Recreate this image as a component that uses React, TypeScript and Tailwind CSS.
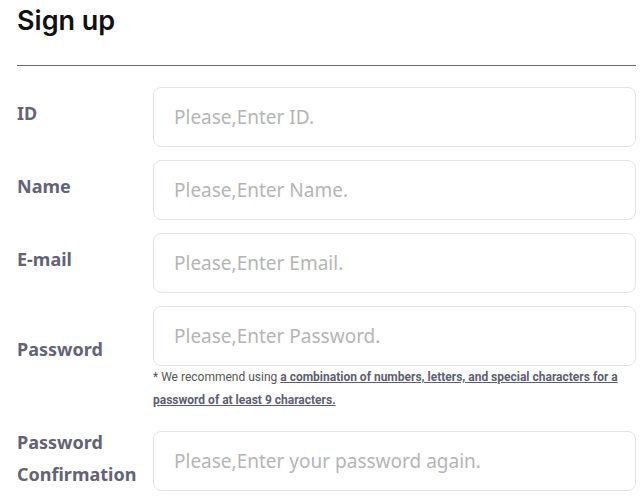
import React from 'react'

const rows = [
  { label: 'ID', placeholder: 'Please,Enter ID.' },
  { label: 'Name', placeholder: 'Please,Enter Name.' },
  { label: 'E-mail', placeholder: 'Please,Enter Email.' },
]

const Field = ({ placeholder }: { placeholder: string }) => (
  <input
    type="text"
    placeholder={placeholder}
    className="w-full h-[60px] rounded-lg border border-[#e4e4e4] bg-white px-5 text-[19px] text-[#333] placeholder:text-[#b5b5b5] outline-none font-['Noto_Sans',sans-serif]"
  />
)

export default function App() {
  return (
    <div className="w-[644px] h-[499px] overflow-hidden bg-white px-[17px] pr-[8px]">
      <h1 className="pt-[1px] text-[27px] leading-[40px] font-semibold text-[#111] font-['Inter',sans-serif]">
        Sign up
      </h1>
      <div className="mt-[24px] border-t border-[#6b6b6b]" />

      <form className="mt-[21px] flex flex-col">
        {rows.map((row) => (
          <div key={row.label} className="flex items-center mb-[13px]">
            <label className="w-[136px] shrink-0 pb-[7px] text-[18px] font-bold text-[#636378] font-['Noto_Sans',sans-serif]">
              {row.label}
            </label>
            <Field placeholder={row.placeholder} />
          </div>
        ))}

        <div className="flex items-start">
          <label className="w-[136px] shrink-0 mt-[30px] text-[18px] font-bold text-[#636378] font-['Noto_Sans',sans-serif]">
            Password
          </label>
          <div className="flex-1">
            <Field placeholder="Please,Enter Password." />
            <p className="text-[12px] leading-[23px] text-[#555] font-['Roboto',sans-serif]">
              * We recommend using{' '}
              <a href="#" className="font-bold underline text-[#5e5e73]">
                a combination of numbers, letters, and special characters for a password of at least 9 characters.
              </a>
            </p>
          </div>
        </div>

        <div className="mt-[14px] flex items-center">
          <label className="w-[136px] shrink-0 pb-[6px] text-[18px] leading-[32px] font-bold text-[#636378] font-['Noto_Sans',sans-serif]">
            Password
            <br />
            Confirmation
          </label>
          <Field placeholder="Please,Enter your password again." />
        </div>
      </form>
    </div>
  )
}
